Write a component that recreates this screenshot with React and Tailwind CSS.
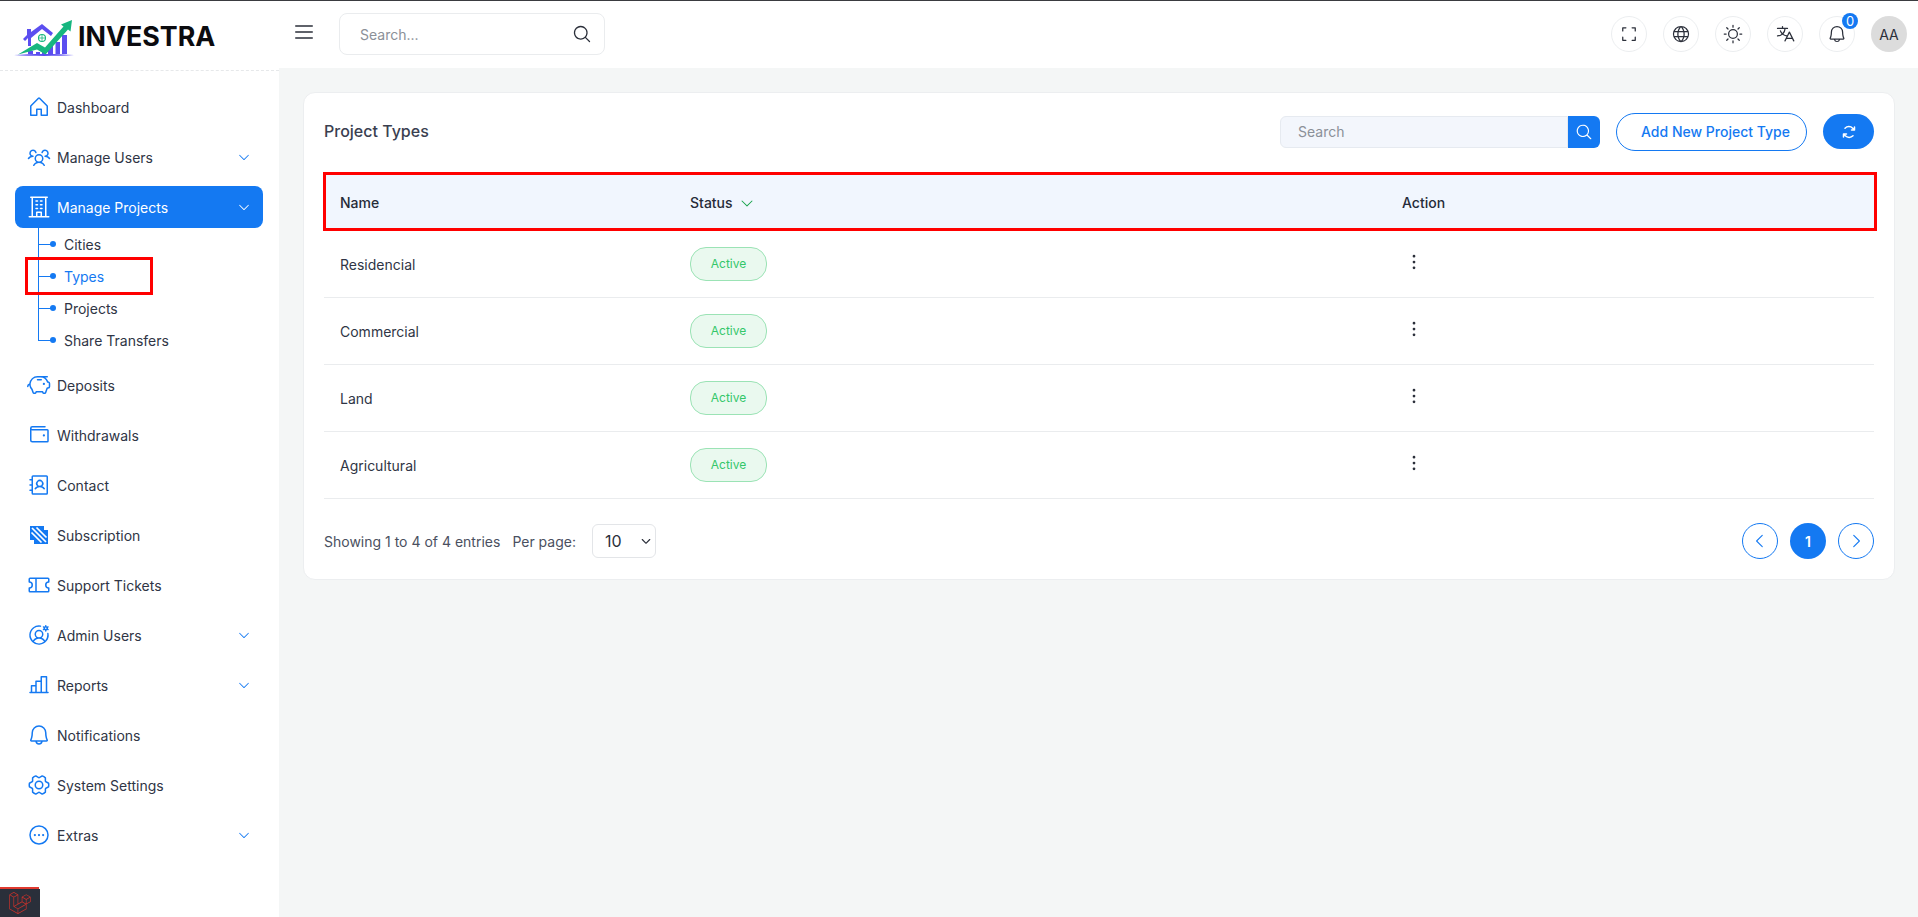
import React from 'react';
import {
  PiHouse, PiUsersThree, PiBuilding, PiCaretDown, PiPiggyBank,
  PiWallet, PiAddressBook, PiTicket, PiUserCircleGear, PiChartBar,
  PiBell, PiGearSix, PiDotsThreeCircle, PiList, PiMagnifyingGlass,
  PiCornersOut, PiGlobe, PiSun, PiTranslate, PiArrowsClockwiseBold,
  PiCaretLeft, PiCaretRight, PiDotsThreeVerticalBold, PiCaretDownBold,
} from 'react-icons/pi';
import { SiLaravel } from 'react-icons/si';

const SubscriptionIcon = ({ className }) => (
  <svg viewBox="0 0 24 24" className={className}>
    <path d="M3 3h14v4h4v14H7v-4H3z" fill="currentColor" />
    <path d="M5 5l14 14M9.500 4.500l10 10M4.500 9.500l10 10" stroke="#fff" strokeWidth="1.700" />
  </svg>
);

// drawn 1:1 against the 70x50 crop of the reference logo
const Logo = () => (
  <svg viewBox="0 0 70 50" className="w-[70px] h-[50px] shrink-0">
    <path d="M4 44c18-1.500 41-1.500 60 0-19 1.200-41 1.200-60 0z" fill="#5b4ef0" />
    <path d="M13 28l4-4v-6h4v3l11-8 11 9-2 3-9-7-11 9v8h-3v-8l-3 3z" fill="#5b4ef0" />
    <circle cx="32" cy="27" r="3.500" fill="none" stroke="#16b67f" strokeWidth="1.100" />
    <path d="M32 24v6M29 27h6" stroke="#16b67f" strokeWidth="0.800" />
    <path d="M18 43h5v-3h-5zM26 43h4v-2h-4zM32 43h4v-3h-4zM38 43h5v-8h-5zM45.500 43h4.500V31h-4.500zM52 43h5V24h-5z" fill="#5b4ef0" />
    <path d="M8 43.500l19-11.500 8 4.500 18.500-21-2.500-2 11-4.500-1.500 11.500-2.500-2-22.500 25-8.500-5z" fill="#16b67f" />
  </svg>
);

const MENU_TOP = [
  { label: 'Dashboard', Icon: PiHouse },
  { label: 'Manage Users', Icon: PiUsersThree, caret: true },
];

const SUB_ITEMS = ['Cities', 'Types', 'Projects', 'Share Transfers'];

const MENU_BOTTOM = [
  { label: 'Deposits', Icon: PiPiggyBank },
  { label: 'Withdrawals', Icon: PiWallet },
  { label: 'Contact', Icon: PiAddressBook },
  { label: 'Subscription', Icon: SubscriptionIcon },
  { label: 'Support Tickets', Icon: PiTicket },
  { label: 'Admin Users', Icon: PiUserCircleGear, caret: true },
  { label: 'Reports', Icon: PiChartBar, caret: true },
  { label: 'Notifications', Icon: PiBell },
  { label: 'System Settings', Icon: PiGearSix },
  { label: 'Extras', Icon: PiDotsThreeCircle, caret: true },
];

const ROWS = ['Residencial', 'Commercial', 'Land', 'Agricultural'];

const NavItem = ({ label, Icon, caret }) => (
  <div className="flex items-center h-[42px] pl-[12px] pr-[12px] rounded-lg text-[#2f3545]">
    <Icon className="w-6 h-6 text-[#1479f2] shrink-0" />
    <span className="ml-[6px] text-[14px] flex-1">{label}</span>
    {caret && <PiCaretDown className="w-[14px] h-[14px] text-[#1479f2]" />}
  </div>
);

const Sidebar = () => (
  <aside className="w-[279px] shrink-0 bg-white flex flex-col">
    <div className="h-[70px] flex items-center pl-[10px] border-b border-dashed border-[#e6e8ea]">
      <Logo />
      <span className="-ml-[2px] mt-[2px] text-[26.800px] font-bold text-[#0b0b0f] leading-none">INVESTRA</span>
    </div>
    <nav className="pl-[15px] pr-[16px] pt-[15px] flex flex-col gap-2">
      {MENU_TOP.map((m) => <NavItem key={m.label} {...m} />)}
      <div>
        <div className="flex items-center h-[42px] pl-[12px] pr-[12px] rounded-lg bg-[#1479f2] text-white">
          <PiBuilding className="w-6 h-6 shrink-0" />
          <span className="ml-[6px] text-[14px] flex-1">Manage Projects</span>
          <PiCaretDown className="w-[14px] h-[14px]" />
        </div>
        <div className="relative">
          <div className="absolute left-[23px] top-0 h-[112px] w-px bg-[#1479f2]" />
          {SUB_ITEMS.map((s) => (
            <div key={s} className="flex items-center h-8">
              <div className="ml-[23px] w-[16px] h-px bg-[#1479f2] relative">
                <span className="absolute -right-[2px] -top-[2.500px] w-[6px] h-[6px] rounded-full bg-[#1479f2]" />
              </div>
              <span className={`ml-[10px] text-[14px] ${s === 'Types' ? 'text-[#1479f2]' : 'text-[#2f3545]'}`}>{s}</span>
            </div>
          ))}
          <div className="absolute left-[10px] top-[29px] w-[128px] h-[38px] border-[3px] border-[#ff0000]" />
        </div>
      </div>
      {MENU_BOTTOM.map((m) => <NavItem key={m.label} {...m} />)}
    </nav>
  </aside>
);

const RoundIcon = ({ children }) => (
  <div className="relative w-9 h-9 rounded-full border border-[#eceef0] flex items-center justify-center text-[#2b2f3a]">
    {children}
  </div>
);

const Topbar = () => (
  <header className="h-[67px] bg-white flex items-center pl-[13px] pr-[11px]">
    <PiList className="w-6 h-6 text-[#2b2f3a] mb-[6px]" />
    <div className="ml-[23px] w-[266px] h-[42px] border border-[#eaecee] rounded-lg flex items-center pl-5 pr-3 -mt-[1px]">
      <span className="flex-1 text-[14px] text-[#8b9098]">Search...</span>
      <PiMagnifyingGlass className="w-5 h-5 text-[#2b2f3a]" />
    </div>
    <div className="ml-auto flex items-center gap-4 -mt-[1px]">
      <RoundIcon><PiCornersOut className="w-5 h-5" /></RoundIcon>
      <RoundIcon><PiGlobe className="w-5 h-5" /></RoundIcon>
      <RoundIcon><PiSun className="w-5 h-5" /></RoundIcon>
      <RoundIcon><PiTranslate className="w-5 h-5" /></RoundIcon>
      <RoundIcon>
        <PiBell className="w-5 h-5" />
        <span className="absolute -top-[4px] right-[-4px] w-4 h-4 rounded-full bg-[#1479f2] text-white text-[13px] leading-none flex items-center justify-center">0</span>
      </RoundIcon>
      <div className="w-9 h-9 rounded-full bg-[#dcdcdc] text-[#2b2f3a] text-[14px] flex items-center justify-center">AA</div>
    </div>
  </header>
);

const ProjectTypes = () => (
  <section className="bg-white border border-[#eceef0] rounded-xl px-5 pt-[9px] pb-5">
    <div className="flex items-center h-[59px]">
      <h1 className="text-[16px] font-medium text-[#3a4050] flex-1 pb-[2px]">Project Types</h1>
      <div className="flex h-8 w-[320px]">
        <div className="flex-1 bg-[#f3f6fc] border border-[#e6eaf0] rounded-l-md flex items-center pl-[17px] text-[14px] text-[#8b9098]">Search</div>
        <button className="w-8 bg-[#1479f2] rounded-r-md flex items-center justify-center text-white">
          <PiMagnifyingGlass className="w-[18px] h-[18px]" />
        </button>
      </div>
      <button className="ml-4 w-[191px] h-[38px] border border-[#1479f2] rounded-full pl-[8px] text-[14px] font-medium text-[#1479f2]">
        Add New Project Type
      </button>
      <button className="ml-4 w-[51px] h-[35px] rounded-full bg-[#1479f2] text-white flex items-center justify-center">
        <PiArrowsClockwiseBold className="w-4 h-4" />
      </button>
    </div>
    <div className="mt-[11px] h-[59px] -ml-px -mr-[3px] pt-[2px] flex items-center bg-[#f1f6fe] border-[3px] border-[#ff0000] text-[14px] font-medium text-[#262b38]">
      <div className="w-[348px] pl-[14px]">Name</div>
      <div className="w-[712px] pl-[16px] flex items-center gap-[6px]">
        Status <PiCaretDown className="w-4 h-4 text-[#16a34a]" />
      </div>
      <div className="pl-[16px]">Action</div>
    </div>
    {ROWS.map((name) => (
      <div key={name} className="h-[67px] flex items-center border-b border-[#eaecee] text-[14px] text-[#2f3545]">
        <div className="w-[350px] pl-4">{name}</div>
        <div className="w-[712px] pl-4">
          <span className="inline-flex items-center justify-center w-[77px] h-[34px] rounded-[16px] border border-[#9be3b5] bg-[#eaf9ef] text-[12px] text-[#34c76a]">Active</span>
        </div>
        <div className="pl-[17px] -mt-1">
          <PiDotsThreeVerticalBold className="w-[22px] h-[22px] text-[#2b2f3a]" />
        </div>
      </div>
    ))}
    <div className="flex items-center mt-6 text-[14px] text-[#4a5060]">
      <span>Showing 1 to 4 of 4 entries</span>
      <span className="ml-3">Per page:</span>
      <div className="ml-4 w-[64px] h-[34px] border border-[#e3e5e8] rounded-md flex items-center pl-3 pr-[3px] text-[16px] text-[#2b2f3a]">
        <span className="flex-1">10</span>
        <PiCaretDownBold className="w-3 h-3" />
      </div>
      <div className="ml-auto flex items-center gap-3">
        <button className="w-9 h-9 rounded-full border border-[#1479f2] flex items-center justify-center text-[#1479f2]">
          <PiCaretLeft className="w-[18px] h-[18px]" />
        </button>
        <button className="w-9 h-9 rounded-full bg-[#1479f2] text-white text-[14px] font-semibold">1</button>
        <button className="w-9 h-9 rounded-full border border-[#1479f2] flex items-center justify-center text-[#1479f2]">
          <PiCaretRight className="w-[18px] h-[18px]" />
        </button>
      </div>
    </div>
  </section>
);

export default function App() {
  return (
    <div className="relative h-[917px] overflow-hidden bg-[#f4f6f6] font-['Inter',sans-serif] border-t border-[#3a3b40] flex">
      <Sidebar />
      <div className="flex-1 flex flex-col min-w-0">
        <Topbar />
        <main className="pt-6 pl-6 pr-[23px]">
          <ProjectTypes />
        </main>
      </div>
      <div className="absolute left-0 bottom-0 w-10 h-[28px] bg-[#2a2f3a] flex items-center justify-center">
        <div className="absolute -top-[2px] left-0 w-[39px] h-[2px] bg-[#e0392f]" />
        <SiLaravel className="w-[22px] h-[22px] text-[#c8322b]" />
      </div>
    </div>
  );
}
